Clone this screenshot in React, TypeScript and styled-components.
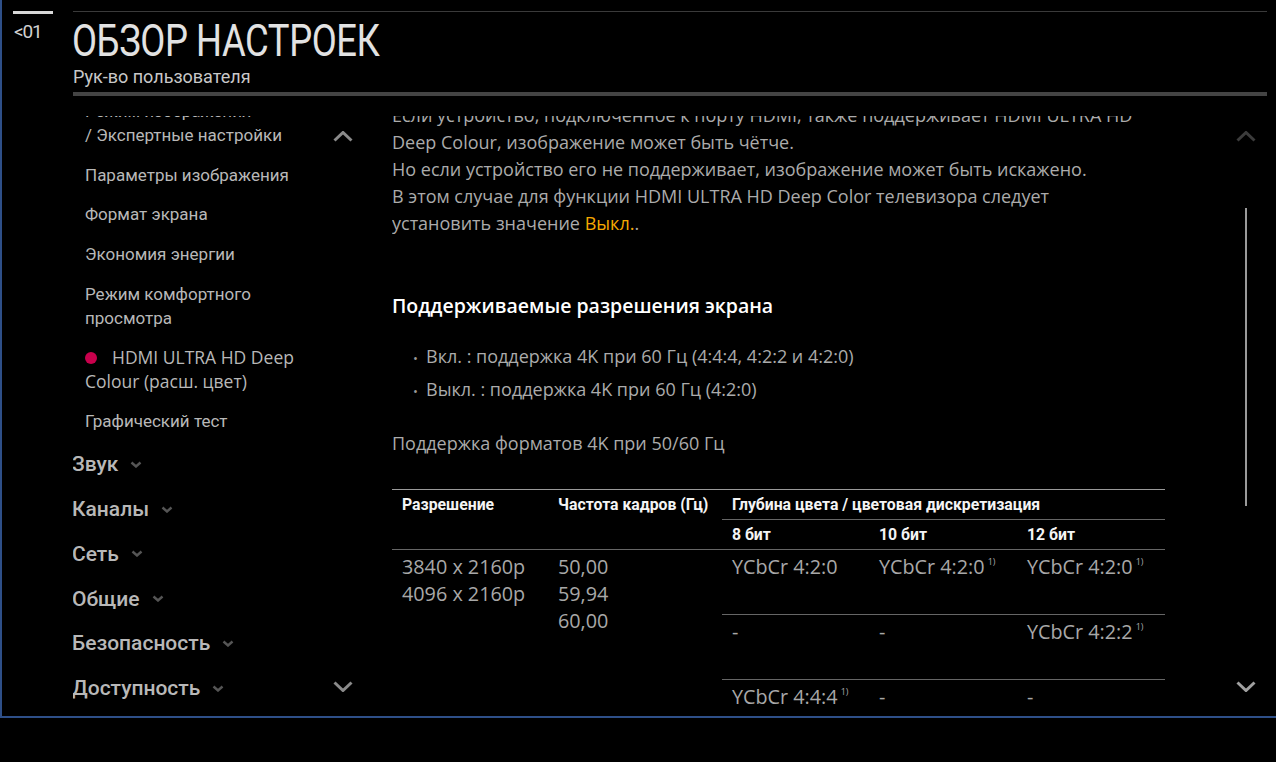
import React from "react";
import styled, { createGlobalStyle } from "styled-components";

const GlobalStyle = createGlobalStyle`
  html, body { margin: 0; padding: 0; background: #000; }
  body { font-family: Roboto, "Open Sans", sans-serif; }
  #root { width: 1276px; height: 762px; background: #000; }
`;

const Frame = styled.div`
  width: 1276px;
  height: 718px;
  box-sizing: border-box;
  border-left: 2px solid #2e4f88;
  border-bottom: 2px solid #2e4f88;
  display: grid;
  grid-template-columns: 71px 319px 773px 1fr;
  grid-template-rows: 116px 600px;
  overflow: hidden;
`;

const Gutter = styled.div`
  grid-row: 1 / 3;
  padding: 11px 0 0 11px;
`;

const GutterBar = styled.div`
  width: 40px;
  height: 3px;
  background: #d8d8d8;
`;

const PageNo = styled.div`
  margin-top: 7px;
  margin-left: 1px;
  font-family: Roboto, sans-serif;
  font-size: 19px;
  line-height: 22px;
  letter-spacing: -1.2px;
  color: #d0d0d0;
`;

const Header = styled.header`
  grid-column: 2 / 5;
  margin: 11px 9px 0 0;
  height: 85px;
  box-sizing: border-box;
  border-top: 1px solid #3a3a3a;
  border-bottom: 4px solid #444;
`;

const Title = styled.h1`
  margin: 5px 0 0 -1px;
  font-family: Roboto, sans-serif;
  font-weight: 400;
  font-size: 44px;
  line-height: 48px;
  color: #e2e2e2;
  letter-spacing: -0.5px;
  transform: scaleX(0.827);
  transform-origin: left center;
  white-space: nowrap;
`;

const Subtitle = styled.div`
  margin-top: 1px;
  font-family: Roboto, sans-serif;
  font-size: 18px;
  line-height: 22px;
  color: #c8c8c8;
`;

const Nav = styled.nav`
  position: relative;
  overflow: hidden;
`;

const NavList = styled.ul`
  list-style: none;
  margin: -25px 0 0 0;
  padding: 0;
`;

const SubItem = styled.li<{ $alt?: boolean }>`
  padding: 8px 0 7.7px 12px;
  width: 250px;
  font-family: ${(p) => (p.$alt ? '"Open Sans", sans-serif' : "Roboto, sans-serif")};
  font-size: ${(p) => (p.$alt ? "17.5px" : "17px")};
  line-height: 24px;
  color: #b8b8b8;
`;

const Dot = styled.span`
  display: inline-block;
  width: 12px;
  height: 12px;
  border-radius: 50%;
  background: #c8004c;
  margin-right: 15px;
  vertical-align: 0px;
`;

const TopGroup = styled.li`
  margin-top: 1px;
`;

const TopList = styled.ul`
  list-style: none;
  margin: 0;
  padding: 0;
`;

const TopItem = styled.li`
  height: 44.8px;
  display: flex;
  align-items: center;
  gap: 12px;
  margin-left: -1px;
  font-family: Roboto, sans-serif;
  font-weight: 500;
  font-size: 21px;
  color: #b8b8b8;
`;

const ScrollArrow = styled.svg<{ $top: number; $left: number }>`
  position: absolute;
  top: ${(p) => p.$top}px;
  left: ${(p) => p.$left}px;
`;

const Content = styled.main`
  overflow: hidden;
  font-family: "Open Sans", sans-serif;
  font-size: 18px;
  line-height: 27px;
  color: #ababab;
`;

const Para = styled.p<{ $top?: number }>`
  margin: ${(p) => p.$top ?? 0}px 0 0 0;
  white-space: nowrap;
`;

const Hl = styled.span`
  color: #f5a800;
`;

const Heading = styled.h2`
  margin: 55px 0 0 0;
  font-family: "Open Sans", sans-serif;
  font-weight: 600;
  font-size: 19.5px;
  line-height: 28px;
  color: #fff;
`;

const Bullets = styled.ul`
  list-style: none;
  margin: 21px 0 0 0;
  padding: 0 0 0 21px;
`;

const Bullet = styled.li`
  line-height: 31px;
  &::before {
    content: "•";
    display: inline-block;
    width: 13px;
    color: #999;
    font-size: 13px;
  }
`;

const Table = styled.table`
  margin-top: 32px;
  width: 773px;
  border-collapse: collapse;
  table-layout: fixed;
  border-top: 1px solid #9a9a9a;
`;

const Th = styled.th<{ $line?: boolean }>`
  text-align: left;
  vertical-align: top;
  padding: 5px 0 0 10px;
  height: 24px;
  font-family: Roboto, sans-serif;
  font-weight: 700;
  font-size: 15.8px;
  line-height: 20px;
  color: #f4f4f4;
  border-bottom: ${(p) => (p.$line ? "1px solid #666" : "none")};
`;

const Td = styled.td<{ $line?: boolean }>`
  vertical-align: top;
  padding: 3px 0 0 10px;
  height: 61px;
  font-family: "Open Sans", sans-serif;
  font-size: 19.8px;
  line-height: 27px;
  color: #a8a8a8;
  white-space: nowrap;
  border-top: ${(p) => (p.$line ? "1px solid #666" : "none")};
`;

const HeadRow = styled.tr<{ $line?: boolean }>`
  border-bottom: ${(p) => (p.$line ? "1px solid #666" : "none")};
`;

const Sup = styled.sup`
  font-size: 9px;
  margin-left: 3px;
  vertical-align: 9px;
  line-height: 0;
`;

const Side = styled.aside`
  position: relative;
`;

const ScrollTrack = styled.div`
  position: absolute;
  left: 80px;
  top: 92px;
  width: 2px;
  height: 298px;
  background: #9a9a9a;
`;

const Chevron = ({ dir, color, w = 20, h = 11, sw = 3 }: { dir: "up" | "down"; color: string; w?: number; h?: number; sw?: number }) => {
  const pts = dir === "up" ? `1.5,${h - 1.5} ${w / 2},1.5 ${w - 1.5},${h - 1.5}` : `1.5,1.5 ${w / 2},${h - 1.5} ${w - 1.5},1.5`;
  return <polyline points={pts} fill="none" stroke={color} strokeWidth={sw} strokeLinecap="butt" strokeLinejoin="miter" />;
};

const SmallChevron = () => (
  <svg width="12" height="7" viewBox="0 0 12 7">
    <polyline points="1.5,1.5 6,5.5 10.5,1.5" fill="none" stroke="#555" strokeWidth="2.4" />
  </svg>
);

const topItems = ["Звук", "Каналы", "Сеть", "Общие", "Безопасность", "Доступность"];

export default function App() {
  return (
    <>
      <GlobalStyle />
      <Frame>
        <Gutter>
          <GutterBar />
          <PageNo>&lt;01</PageNo>
        </Gutter>
        <Header>
          <Title>ОБЗОР НАСТРОЕК</Title>
          <Subtitle>Рук-во пользователя</Subtitle>
        </Header>
        <Nav>
          <NavList>
            <SubItem>
              Режим изображения
              <br />/ Экспертные настройки
            </SubItem>
            <SubItem>Параметры изображения</SubItem>
            <SubItem>Формат экрана</SubItem>
            <SubItem>Экономия энергии</SubItem>
            <SubItem>
              Режим комфортного
              <br />
              просмотра
            </SubItem>
            <SubItem $alt>
              <Dot />
              HDMI ULTRA HD Deep
              <br />
              Colour (расш. цвет)
            </SubItem>
            <SubItem>Графический тест</SubItem>
            <TopGroup>
              <TopList>
                {topItems.map((t) => (
                  <TopItem key={t}>
                    {t}
                    <SmallChevron />
                  </TopItem>
                ))}
              </TopList>
            </TopGroup>
          </NavList>
          <ScrollArrow $top={15} $left={260} width="20" height="11" viewBox="0 0 20 11">
            <Chevron dir="up" color="#8a8a8a" />
          </ScrollArrow>
          <ScrollArrow $top={565} $left={260} width="20" height="11" viewBox="0 0 20 11">
            <Chevron dir="down" color="#8a8a8a" />
          </ScrollArrow>
        </Nav>
        <Content>
          <Para $top={-14}>
            Если устройство, подключенное к порту HDMI, также поддерживает HDMI ULTRA HD
            <br />
            Deep Colour, изображение может быть чётче.
            <br />
            Но если устройство его не поддерживает, изображение может быть искажено.
            <br />
            В этом случае для функции HDMI ULTRA HD Deep Color телевизора следует
            <br />
            установить значение <Hl>Выкл.</Hl>.
          </Para>
          <Heading>Поддерживаемые разрешения экрана</Heading>
          <Bullets>
            <Bullet>Вкл. : поддержка 4K при 60 Гц (4:4:4, 4:2:2 и 4:2:0)</Bullet>
            <Bullet>Выкл. : поддержка 4K при 60 Гц (4:2:0)</Bullet>
          </Bullets>
          <Para $top={23}>Поддержка форматов 4K при 50/60 Гц</Para>
          <Table>
            <colgroup>
              <col style={{ width: 156 }} />
              <col style={{ width: 174 }} />
              <col style={{ width: 147 }} />
              <col style={{ width: 148 }} />
              <col style={{ width: 148 }} />
            </colgroup>
            <thead>
              <tr>
                <Th rowSpan={2}>Разрешение</Th>
                <Th rowSpan={2}>Частота кадров (Гц)</Th>
                <Th colSpan={3} $line>
                  Глубина цвета / цветовая дискретизация
                </Th>
              </tr>
              <HeadRow $line>
                <Th>8 бит</Th>
                <Th>10 бит</Th>
                <Th>12 бит</Th>
              </HeadRow>
            </thead>
            <tbody>
              <tr>
                <Td rowSpan={3}>
                  3840 x 2160p
                  <br />
                  4096 x 2160p
                </Td>
                <Td rowSpan={3}>
                  50,00
                  <br />
                  59,94
                  <br />
                  60,00
                </Td>
                <Td>YCbCr 4:2:0</Td>
                <Td>
                  YCbCr 4:2:0<Sup>1)</Sup>
                </Td>
                <Td>
                  YCbCr 4:2:0<Sup>1)</Sup>
                </Td>
              </tr>
              <tr>
                <Td $line>-</Td>
                <Td $line>-</Td>
                <Td $line>
                  YCbCr 4:2:2<Sup>1)</Sup>
                </Td>
              </tr>
              <tr>
                <Td $line>
                  YCbCr 4:4:4<Sup>1)</Sup>
                </Td>
                <Td $line>-</Td>
                <Td $line>-</Td>
              </tr>
            </tbody>
          </Table>
        </Content>
        <Side>
          <ScrollArrow $top={15} $left={71} width="20" height="11" viewBox="0 0 20 11">
            <Chevron dir="up" color="#3c3c3c" />
          </ScrollArrow>
          <ScrollTrack />
          <ScrollArrow $top={565} $left={71} width="20" height="11" viewBox="0 0 20 11">
            <Chevron dir="down" color="#a0a0a0" />
          </ScrollArrow>
        </Side>
      </Frame>
    </>
  );
}
